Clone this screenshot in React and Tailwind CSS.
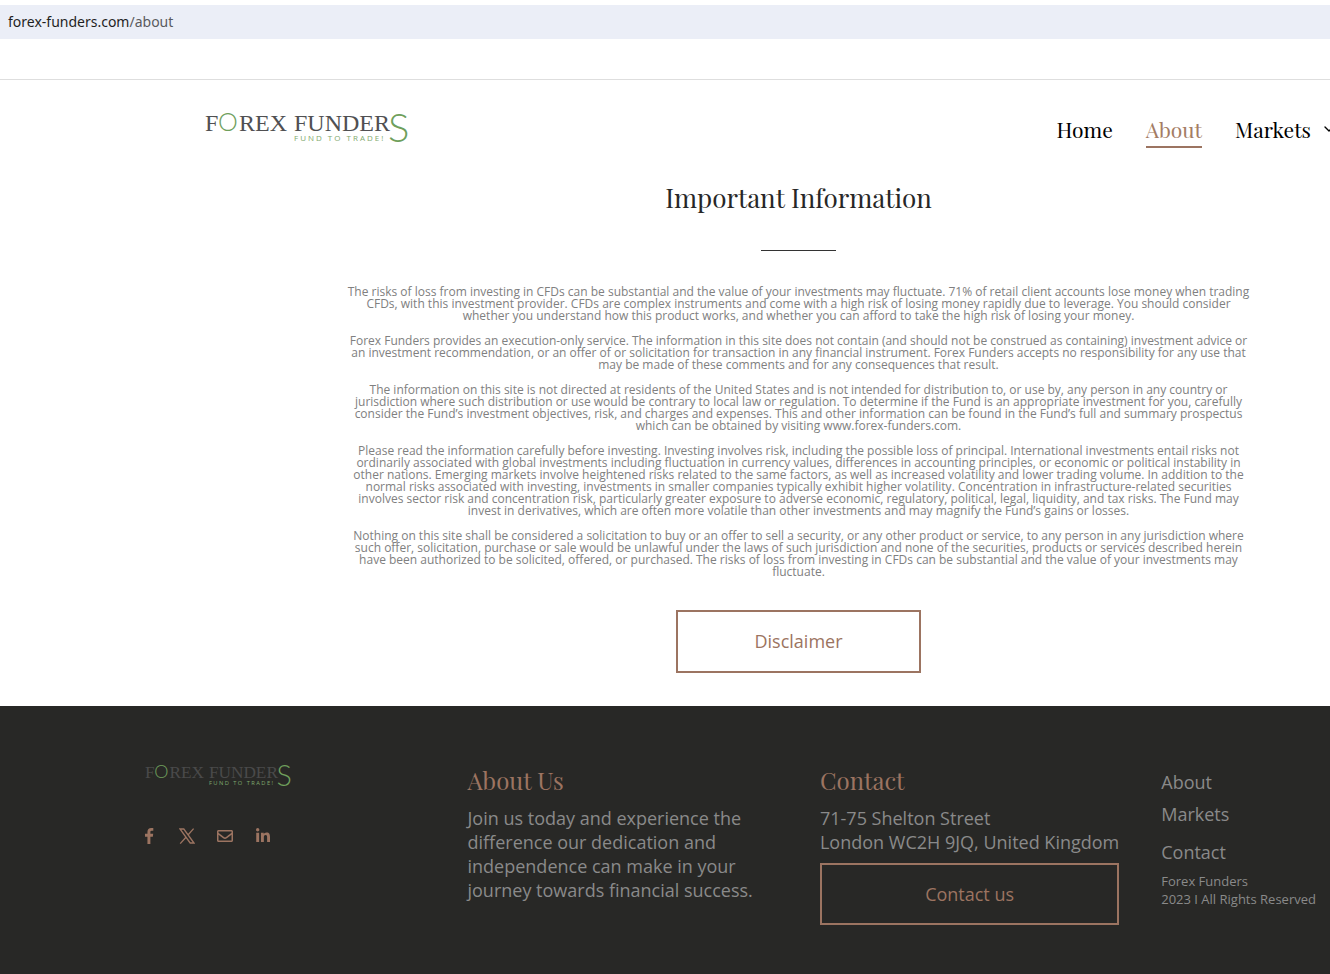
import { FaLinkedinIn, FaRegEnvelope } from 'react-icons/fa'
import { FiChevronDown } from 'react-icons/fi'

const paragraphs = [
  'The risks of loss from investing in CFDs can be substantial and the value of your investments may fluctuate. 71% of retail client accounts lose money when trading CFDs, with this investment provider. CFDs are complex instruments and come with a high risk of losing money rapidly due to leverage. You should consider whether you understand how this product works, and whether you can afford to take the high risk of losing your money.',
  'Forex Funders provides an execution-only service. The information in this site does not contain (and should not be construed as containing) investment advice or an investment recommendation, or an offer of or solicitation for transaction in any financial instrument. Forex Funders accepts no responsibility for any use that may be made of these comments and for any consequences that result.',
  'The information on this site is not directed at residents of the United States and is not intended for distribution to, or use by, any person in any country or jurisdiction where such distribution or use would be contrary to local law or regulation. To determine if the Fund is an appropriate investment for you, carefully consider the Fund’s investment objectives, risk, and charges and expenses. This and other information can be found in the Fund’s full and summary prospectus which can be obtained by visiting www.forex-funders.com.',
  'Please read the information carefully before investing. Investing involves risk, including the possible loss of principal. International investments entail risks not ordinarily associated with global investments including fluctuation in currency values, differences in accounting principles, or economic or political instability in other nations. Emerging markets involve heightened risks related to the same factors, as well as increased volatility and lower trading volume. In addition to the normal risks associated with investing, investments in smaller companies typically exhibit higher volatility. Concentration in infrastructure-related securities involves sector risk and concentration risk, particularly greater exposure to adverse economic, regulatory, political, legal, liquidity, and tax risks. The Fund may invest in derivatives, which are often more volatile than other investments and may magnify the Fund’s gains or losses.',
  'Nothing on this site shall be considered a solicitation to buy or an offer to sell a security, or any other product or service, to any person in any jurisdiction where such offer, solicitation, purchase or sale would be unlawful under the laws of such jurisdiction and none of the securities, products or services described herein have been authorized to be solicited, offered, or purchased. The risks of loss from investing in CFDs can be substantial and the value of your investments may fluctuate.',
]

function FacebookIcon({ className }) {
  return (
    <svg viewBox="64 0 1664 1664" fill="currentColor" className={className}>
      <path d="M1343 12v264h-157q-86 0-116 36t-30 108v189h293l-39 296h-254v759h-306v-759h-255v-296h255v-218q0-186 104-288.5t277-102.5q147 0 228 12z" />
    </svg>
  )
}

function XIcon({ className }) {
  return (
    <svg viewBox="0 0 16 16" fill="none" stroke="currentColor" strokeWidth="1.3" className={className}>
      <path d="M1 1h3.8l10.2 14h-3.8zM14.6.6 9 7M7 9.2 1.2 15.6" />
    </svg>
  )
}

const socials = [
  { label: 'Facebook', Icon: FacebookIcon },
  { label: 'X', Icon: XIcon },
  { label: 'Email', Icon: FaRegEnvelope },
  { label: 'LinkedIn', Icon: FaLinkedinIn },
]

function Logo({ className, wordClass }) {
  return (
    <svg viewBox="0 -7 206 52" className={className} role="img" aria-label="Forex Funders, fund to trade!">
      <g className="font-['Liberation_Serif',serif]" fontSize="24">
        <g className={wordClass}>
          <text x="0" y="20">F</text>
          <text x="34" y="20">REX</text>
          <text x="89" y="20">FUNDER</text>
        </g>
      </g>
      <g className="fill-[#6f9f5c] font-['Lato',sans-serif] font-light">
        <text x="13" y="20" fontSize="25">O</text>
        <text x="183" y="31" fontSize="40">S</text>
      </g>
      <text x="89" y="30" fontSize="8" letterSpacing="2" className="fill-[#7fa96e] font-['Open_Sans',sans-serif]">
        FUND TO TRADE!
      </text>
    </svg>
  )
}

function AddressBar() {
  return (
    <div className="border-b border-[#dedede] pt-[5px] pb-10">
      <div className="bg-[#ebeef7] px-2 py-[7px] text-[14px] leading-5 text-[#1f1f1f] font-['Noto_Sans',sans-serif]">
        forex-funders.com<span className="text-[#5a5a5e]">/about</span>
      </div>
    </div>
  )
}

function Header() {
  return (
    <header className="flex items-start justify-between overflow-hidden pl-[205px] pt-6">
      <a href="#home">
        <Logo className="h-[52px] w-[206px]" wordClass="fill-[#505052]" />
      </a>
      <nav className="-mr-[7px] flex gap-[33px] pt-[9px] text-[21px] leading-8 text-black font-['Playfair_Display','Liberation_Serif',serif]">
        <a href="#home">Home</a>
        <a href="#about" className="border-b-2 border-[#9c7461] pb-px text-[#a47c64]">About</a>
        <a href="#markets" className="flex items-center gap-[10px] self-start">
          Markets
          <FiChevronDown className="h-4 w-4" />
        </a>
      </nav>
    </header>
  )
}

function Information() {
  return (
    <main className="flex flex-col items-center pb-[33px] pl-[342px] pr-[75px] pt-[22px]">
      <h1 className="text-[26px] leading-10 text-[#272727] font-['Playfair_Display','Liberation_Serif',serif]">
        Important Information
      </h1>
      <hr className="mt-8 w-[75px] border-[#333333]" />
      <div className="mt-[35px] flex flex-col gap-[13px] text-center text-[12px] leading-[12px] text-[#808080]">
        {paragraphs.map((text) => (
          <p key={text}>{text}</p>
        ))}
      </div>
      <a
        href="#disclaimer"
        className="mt-8 w-[245px] border-2 border-[#9c7461] py-[17px] text-center text-[18px] leading-[25px] text-[#9c7461]"
      >
        Disclaimer
      </a>
    </main>
  )
}

function Footer() {
  return (
    <footer className="grid flex-1 grid-cols-[323fr_353fr_340fr_169fr] bg-[#282826] pb-12 pl-[145px] pt-[52px] text-[18px] leading-6 text-[#8a8a8a]">
      <div>
        <Logo className="h-[38px] w-[148px]" wordClass="fill-[#4a4a4a]" />
        <div className="-ml-1 mt-8 flex gap-[22px] text-[#9c7461]">
          {socials.map(({ label, Icon }) => (
            <a key={label} href={`#${label.toLowerCase()}`} aria-label={label}>
              <Icon className="h-4 w-4" />
            </a>
          ))}
        </div>
      </div>

      <div className="pr-16 pt-[6px]">
        <h2 className="text-[24px] leading-8 text-[#9c7461] font-['Playfair_Display','Liberation_Serif',serif]">About Us</h2>
        <p className="mt-[10px]">
          Join us today and experience the difference our dedication and independence can make in your journey towards
          financial success.
        </p>
      </div>

      <div className="pr-[42px] pt-[6px]">
        <h2 className="text-[24px] leading-8 text-[#9c7461] font-['Playfair_Display','Liberation_Serif',serif]">Contact</h2>
        <address className="mt-[10px] whitespace-nowrap not-italic">
          71-75 Shelton Street
          <br />
          London WC2H 9JQ, United Kingdom
        </address>
        <a
          href="#contact"
          className="mt-[9px] block border-2 border-[#9c7461] py-[17px] text-center text-[#9c7461]"
        >
          Contact us
        </a>
      </div>

      <div>
        <ul className="flex flex-col pt-3">
          <li><a href="#about">About</a></li>
          <li className="mt-2"><a href="#markets">Markets</a></li>
          <li className="mt-[14px]"><a href="#contact">Contact</a></li>
        </ul>
        <p className="mt-2 whitespace-nowrap text-[13px] leading-[18px]">
          Forex Funders
          <br />
          2023 I All Rights Reserved
        </p>
      </div>
    </footer>
  )
}

export default function App() {
  return (
    <div className="flex min-h-screen flex-col bg-white font-['Open_Sans',sans-serif]">
      <AddressBar />
      <Header />
      <Information />
      <Footer />
    </div>
  )
}
